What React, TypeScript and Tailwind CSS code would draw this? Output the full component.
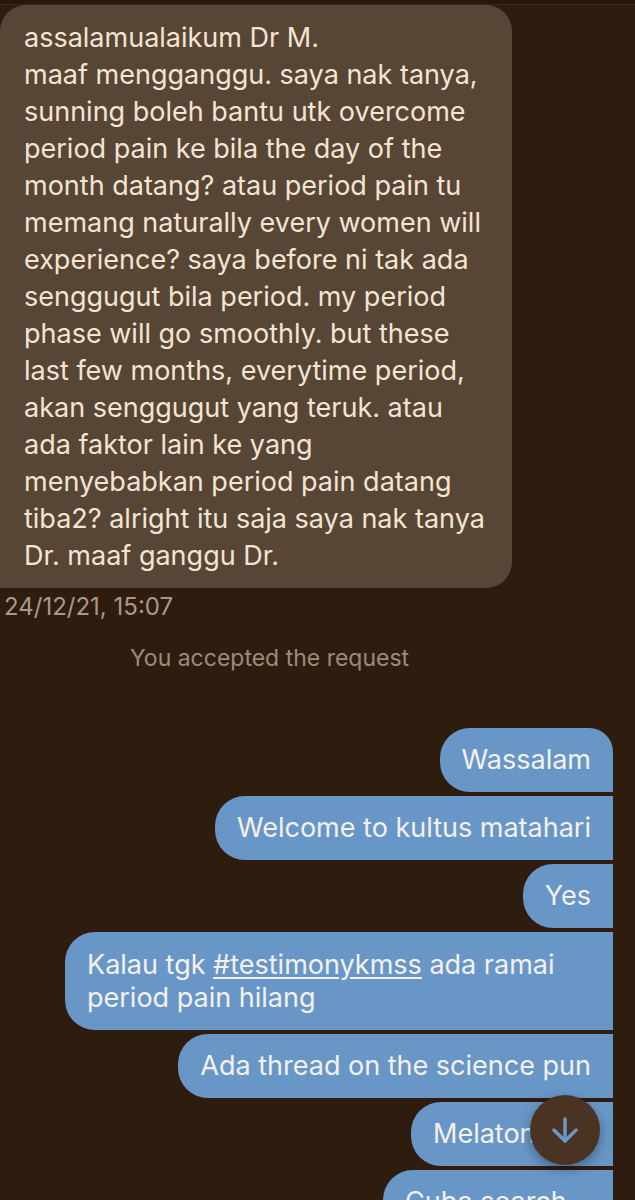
import React from "react";
import { ArrowDown } from "lucide-react";

const leftLines = [
  "assalamualaikum Dr M.",
  "maaf mengganggu. saya nak tanya,",
  "sunning boleh bantu utk overcome",
  "period pain ke bila the day of the",
  "month datang? atau period pain tu",
  "memang naturally every women will",
  "experience? saya before ni tak ada",
  "senggugut bila period. my period",
  "phase will go smoothly. but these",
  "last few months, everytime period,",
  "akan senggugut yang teruk. atau",
  "ada faktor lain ke yang",
  "menyebabkan period pain datang",
  "tiba2? alright itu saja saya nak tanya",
  "Dr. maaf ganggu Dr.",
];

export default function App() {
  const font = { fontFamily: "Inter, 'Noto Sans', sans-serif" };
  return (
    <div
      className="relative w-[635px] h-[1200px] overflow-hidden bg-[#2e1d0e]"
      style={font}
    >
      <div className="h-[5px] bg-[#27180b] border-b border-[#3a2919]" />
      <div className="w-[512px] rounded-tl-[26px] rounded-tr-[26px] rounded-br-[26px] bg-[#574636] px-[24px] py-[14px] text-[27px] leading-[37px] text-[#f3e4d3]">
        {leftLines.map((l, i) => (
          <div key={i} className="whitespace-nowrap">{l}</div>
        ))}
      </div>
      <div className="pl-[4px] mt-[5px] text-[24px] leading-[28px] text-[#a89888]">
        24/12/21, 15:07
      </div>
      <div className="pl-[130px] mt-[22px] text-[23px] leading-[30px] text-[#9b8b7b]">
        You accepted the request
      </div>
      <div className="mt-[55px] pr-[22px] flex flex-col items-end gap-[4px] text-[27px] text-[#f4f1ec]">
        <div className="bg-[#6897c7] rounded-l-[30px] rounded-tr-[24px] px-[22px] py-[16px] leading-[32px] whitespace-nowrap">
          Wassalam
        </div>
        <div className="bg-[#6897c7] rounded-l-[30px] px-[22px] py-[16px] leading-[32px] whitespace-nowrap">
          Welcome to kultus matahari
        </div>
        <div className="bg-[#6897c7] rounded-l-[30px] px-[22px] py-[16px] leading-[32px] whitespace-nowrap">
          Yes
        </div>
        <div className="bg-[#6897c7] rounded-l-[30px] px-[22px] py-[16px] leading-[33px] w-[548px]">
          <div className="whitespace-nowrap">
            Kalau tgk <span className="underline underline-offset-[3px]">#testimonykmss</span> ada ramai
          </div>
          <div className="whitespace-nowrap">period pain hilang</div>
        </div>
        <div className="bg-[#6897c7] rounded-l-[30px] px-[22px] py-[16px] leading-[32px] whitespace-nowrap">
          Ada thread on the science pun
        </div>
        <div className="w-[202px] bg-[#6897c7] rounded-l-[30px] px-[22px] py-[16px] leading-[32px] whitespace-nowrap">
          Melatonin
        </div>
        <div className="w-[230px] bg-[#6897c7] rounded-l-[30px] px-[22px] py-[16px] leading-[32px] whitespace-nowrap">
          Cuba search
        </div>
      </div>
      <div className="absolute left-[530px] top-[1095px] w-[70px] h-[70px] rounded-full bg-[#4a3322] flex items-center justify-center shadow-[0_4px_12px_rgba(0,0,0,0.35)]">
        <ArrowDown size={38} strokeWidth={2.2} color="#6a97c8" />
      </div>
    </div>
  );
}
